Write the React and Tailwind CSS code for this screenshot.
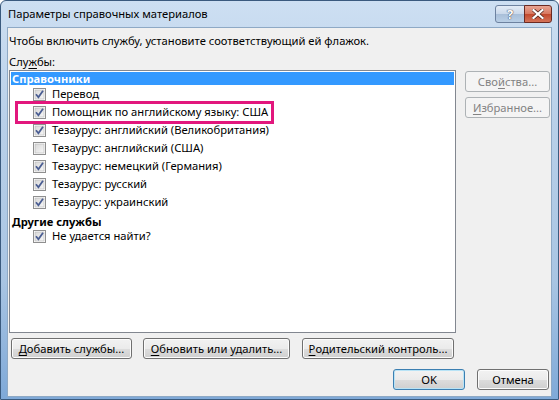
import React from "react";

const font = { fontFamily: '"Noto Sans", "Liberation Sans", sans-serif' };

function Check({ checked }) {
  return (
    <svg width="13" height="13" viewBox="0 0 13 13" className="shrink-0">
      <defs>
        <linearGradient id="cbg" x1="0" y1="0" x2="1" y2="1">
          <stop offset="0" stopColor="#d8d8d8" />
          <stop offset="1" stopColor="#f7f7f7" />
        </linearGradient>
      </defs>
      <rect x="0.5" y="0.5" width="12" height="12" fill="#ffffff" stroke="#8f8f8f" />
      <rect x="2" y="2" width="9" height="9" fill="url(#cbg)" stroke="#b6b6b6" strokeWidth="0.6" />
      {checked && (
        <path d="M3 6.3 L5.4 9.2 L10 2.8" fill="none" stroke="#4a5d92" strokeWidth="1.8" strokeLinejoin="miter" />
      )}
    </svg>
  );
}

function Item({ label, checked = true, highlight = false }) {
  return (
    <div className="flex h-[18px] items-center pl-[22px]">
      <div className="relative flex items-center">
        <Check checked={checked} />
        <span className="ml-[6px] text-[11.2px] leading-none text-black">{label}</span>
        {highlight && (
          <div className="pointer-events-none absolute -left-[18px] -right-[6px] -top-[5px] -bottom-[5px] border-[3px] border-[#e2177d]" />
        )}
      </div>
    </div>
  );
}

function Btn({ children, className = "", disabled = false, def = false }) {
  const base =
    "flex h-[21px] items-center justify-center rounded-[3px] border text-[11.2px] leading-none";
  if (disabled)
    return (
      <div className={`${base} border-[#adb2b5] bg-[#f4f4f4] text-[#838383] ${className}`}>{children}</div>
    );
  return (
    <div
      className={`${base} ${
        def ? "border-[#3c7fb1] shadow-[inset_0_0_0_1px_#b8e3f6]" : "border-[#707070] shadow-[inset_0_0_0_1px_#fcfcfc]"
      } bg-[linear-gradient(#f2f2f2_0%,#ebebeb_50%,#dddddd_51%,#cfcfcf_100%)] text-black ${className}`}
    >
      {children}
    </div>
  );
}

export default function App() {
  return (
    <div style={font} className="h-[400px] w-[559px] overflow-hidden bg-white">
      <div className="flex h-[400px] w-[559px] flex-col rounded-t-[6px] border border-[#3a5a7e] bg-[linear-gradient(#cddff2_0%,#b9d0e9_30%,#a9c5e3_70%,#7fa9d8_100%)] px-[6px] pb-[2px]">
        {/* title bar */}
        <div className="flex h-[26px] shrink-0 items-center">
          <span className="ml-[1px] text-[11.2px] leading-none text-black">Параметры справочных материалов</span>
          <div className="ml-auto flex items-start self-start pt-[4px]">
            <div className="flex h-[18px] w-[30px] items-center justify-center rounded-l-[3px] border border-[#6d82a0] bg-[linear-gradient(#e3ecf6_0%,#c9d8ea_50%,#a9bfd9_51%,#b9cfe6_100%)]">
              <span className="text-[13px] font-bold leading-none text-white [text-shadow:0_0_1px_#334,0_0_1px_#334]">?</span>
            </div>
            <div className="-ml-[1px] flex h-[18px] w-[28px] items-center justify-center rounded-r-[3px] border border-[#6b2a22] bg-[linear-gradient(#e8a493_0%,#d7775f_50%,#c2482c_51%,#d4745a_100%)]">
              <svg width="12" height="10" viewBox="0 0 12 10">
                <path d="M1.5 1 L10.5 9 M10.5 1 L1.5 9" stroke="#4b2018" strokeWidth="3.6" strokeLinecap="square" />
                <path d="M1.5 1 L10.5 9 M10.5 1 L1.5 9" stroke="#ffffff" strokeWidth="2.2" strokeLinecap="square" />
              </svg>
            </div>
          </div>
        </div>
        {/* client */}
        <div className="flex flex-1 flex-col border border-[#8ea9c5] bg-[#f0f0f0] pl-[1px] pr-[1px] pt-[5px]">
          <div className="h-[15px] text-[11.2px] leading-[15px] text-black">
            Чтобы включить службу, установите соответствующий ей флажок.
          </div>
          <div className="mt-[6px] h-[15px] text-[11.2px] leading-[15px] text-black">
            Слу<u className="underline-offset-2">ж</u>бы:
          </div>
          <div className="mt-[1px] flex">
            <div className="h-[263px] w-[447px] border border-[#828790] bg-white p-[1px]">
              <div className="flex h-[13px] items-center bg-[#3399ff] pl-[1px]">
                <span className="text-[11.2px] font-bold leading-none text-white">Справочники</span>
              </div>
              <Item label="Перевод" />
              <Item label="Помощник по английскому языку: США" highlight />
              <Item label="Тезаурус: английский (Великобритания)" />
              <Item label="Тезаурус: английский (США)" checked={false} />
              <Item label="Тезаурус: немецкий (Германия)" />
              <Item label="Тезаурус: русский" />
              <Item label="Тезаурус: украинский" />
              <div className="flex h-[16px] items-end pl-[1px]">
                <span className="text-[11.2px] font-bold leading-none text-black">Другие службы</span>
              </div>
              <Item label="Не удается найти?" />
            </div>
            <div className="ml-[9px] flex flex-col gap-[5px] pt-[1px]">
              <Btn disabled className="w-[85px]">
                Сво<u className="underline-offset-2">й</u>ства...
              </Btn>
              <Btn disabled className="w-[85px]">
                <u className="underline-offset-2">И</u>збранное...
              </Btn>
            </div>
          </div>
          <div className="mt-[5px] flex">
            <Btn className="ml-[2px] w-[121px]">
              <u className="underline-offset-2">Д</u>обавить службы...
            </Btn>
            <Btn className="ml-[11px] w-[147px]">
              <u className="underline-offset-2">О</u>бновить или удалить...
            </Btn>
            <Btn className="ml-[12px] w-[152px]">
              <u className="underline-offset-2">Р</u>одительский контроль...
            </Btn>
          </div>
          <div className="mt-[10px] flex justify-end pr-[1px]">
            <Btn def className="w-[72px]">OK</Btn>
            <Btn className="ml-[12px] w-[72px]">Отмена</Btn>
          </div>
        </div>
      </div>
    </div>
  );
}
